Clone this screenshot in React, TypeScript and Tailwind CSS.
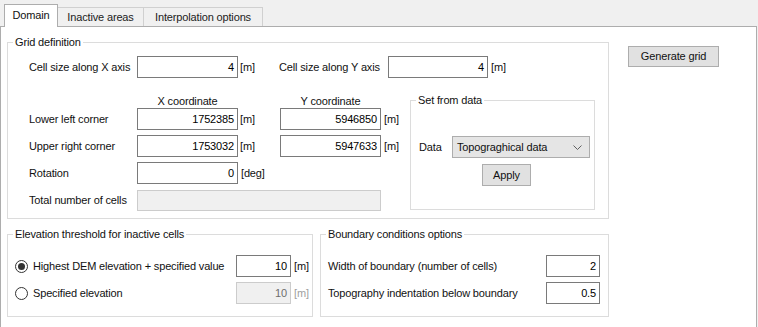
import React from "react";

function GroupBox({ title, className = "", children }: { title: string; className?: string; children?: React.ReactNode }) {
  return (
    <fieldset className={`border border-[#dcdcdc] ${className}`}>
      <legend className="ml-[5px] px-[2px] leading-[13px]">{title}</legend>
      {children}
    </fieldset>
  );
}

function TextBox({ value = "", className = "", disabled = false }: { value?: string; className?: string; disabled?: boolean }) {
  return (
    <div
      className={`h-[22px] flex items-center justify-end pr-[3px] border shrink-0 ${
        disabled ? "border-[#cccccc] bg-[#f0f0f0] text-[#6d6d6d]" : "border-[#7a7a7a] bg-white text-black"
      } ${className}`}
    >
      {value}
    </div>
  );
}

function Radio({ checked = false }: { checked?: boolean }) {
  return (
    <span className="w-[13px] h-[13px] rounded-full border border-[#333333] bg-white flex items-center justify-center shrink-0">
      {checked && <span className="w-[7px] h-[7px] rounded-full bg-[#333333]" />}
    </span>
  );
}

function Button({ label, className = "" }: { label: string; className?: string }) {
  return (
    <div className={`flex items-center justify-center bg-[#e1e1e1] border border-[#adadad] ${className}`}>
      {label}
    </div>
  );
}

export default function App() {
  return (
    <div className="w-[758px] h-[327px] overflow-hidden bg-[#f0f0f0] text-[11px] tracking-[-0.15px] text-[#111111] font-['Liberation_Sans',sans-serif]">
      {/* Tabs */}
      <div className="h-[26px] flex items-end pl-[4px]">
        <div className="relative z-10 -mb-px w-[54px] h-[23px] bg-white border border-b-0 border-[#adadad] flex items-center justify-center pb-[1px]">
          Domain
        </div>
        <div className="-ml-px w-[87px] h-[19px] border border-b-0 border-[#d0d0d0] bg-[#f0f0f0] flex items-center justify-center text-[#222222]">
          Inactive areas
        </div>
        <div className="-ml-px w-[120px] h-[19px] border border-b-0 border-[#d0d0d0] bg-[#f0f0f0] flex items-center justify-center text-[#222222]">
          Interpolation options
        </div>
      </div>

      {/* Tab page */}
      <div className="w-[757px] h-[301px] bg-white border-x border-t border-[#adadad] pl-[6px]">
        <div className="flex items-start">
          <GroupBox title="Grid definition" className="mt-[9px] w-[602px] h-[183px]">
            <div className="pl-[21px]">
              <div className="mt-[7px] flex items-center h-[22px]">
                <span className="w-[108px]">Cell size along X axis</span>
                <TextBox value="4" className="w-[101px]" />
                <span className="w-[41px] pl-[2px]">[m]</span>
                <span className="w-[109px]">Cell size along Y axis</span>
                <TextBox value="4" className="w-[100px]" />
                <span className="pl-[3px]">[m]</span>
              </div>

              <div className="mt-[16px] flex items-start">
                <div className="w-[381px]">
                  <div className="h-[14px] flex items-center">
                    <span className="w-[108px]" />
                    <span className="w-[101px] text-center">X coordinate</span>
                    <span className="w-[42px]" />
                    <span className="w-[101px] text-center">Y coordinate</span>
                  </div>
                  <div className="flex flex-col gap-[5px]">
                    <div className="flex items-center h-[22px]">
                      <span className="w-[108px]">Lower left corner</span>
                      <TextBox value="1752385" className="w-[101px]" />
                      <span className="w-[42px] pl-[2px]">[m]</span>
                      <TextBox value="5946850" className="w-[101px]" />
                      <span className="pl-[3px]">[m]</span>
                    </div>
                    <div className="flex items-center h-[22px]">
                      <span className="w-[108px]">Upper right corner</span>
                      <TextBox value="1753032" className="w-[101px]" />
                      <span className="w-[42px] pl-[2px]">[m]</span>
                      <TextBox value="5947633" className="w-[101px]" />
                      <span className="pl-[3px]">[m]</span>
                    </div>
                    <div className="flex items-center h-[22px]">
                      <span className="w-[108px]">Rotation</span>
                      <TextBox value="0" className="w-[101px]" />
                      <span className="pl-[3px]">[deg]</span>
                    </div>
                    <div className="mt-[1px] flex items-center h-[21px]">
                      <span className="w-[108px]">Total number of cells</span>
                      <TextBox disabled className="w-[244px] !h-[21px]" />
                    </div>
                  </div>
                </div>

                <GroupBox title="Set from data" className="w-[185px] h-[116px]">
                  <div className="mt-[29px] flex items-center h-[22px] pl-[8px]">
                    <span className="w-[33px]">Data</span>
                    <div className="w-[138px] h-[22px] bg-[#e5e5e5] border border-[#adadad] flex items-center justify-between pl-[4px] pr-[7px]">
                      <span>Topograghical data</span>
                      <svg width="9" height="5" viewBox="0 0 9 5">
                        <path d="M0.5 0.5 L4.5 4.5 L8.5 0.5" fill="none" stroke="#606060" strokeWidth="1" />
                      </svg>
                    </div>
                  </div>
                  <Button label="Apply" className="mt-[6px] ml-[71px] w-[49px] h-[22px]" />
                </GroupBox>
              </div>
            </div>
          </GroupBox>

          <Button label="Generate grid" className="ml-[19px] mt-[19px] w-[91px] h-[21px]" />
        </div>

        <div className="mt-[9px] flex items-start">
          <GroupBox title="Elevation threshold for inactive cells" className="w-[306px] h-[89px]">
            <div className="mt-[14px] pl-[7px] flex flex-col gap-[5px]">
              <div className="flex items-center h-[22px]">
                <div className="w-[221px] flex items-center">
                  <Radio checked />
                  <span className="ml-[5px]">Highest DEM elevation + specified value</span>
                </div>
                <TextBox value="10" className="w-[55px]" />
                <span className="pl-[3px]">[m]</span>
              </div>
              <div className="flex items-center h-[22px]">
                <div className="w-[221px] flex items-center">
                  <Radio />
                  <span className="ml-[5px]">Specified elevation</span>
                </div>
                <TextBox value="10" disabled className="w-[55px]" />
                <span className="pl-[3px] text-[#a0a0a0]">[m]</span>
              </div>
            </div>
          </GroupBox>

          <GroupBox title="Boundary conditions options" className="ml-[7px] w-[289px] h-[89px]">
            <div className="mt-[14px] pl-[7px] flex flex-col gap-[5px]">
              <div className="flex items-center h-[22px]">
                <span className="w-[218px]">Width of boundary (number of cells)</span>
                <TextBox value="2" className="w-[54px]" />
              </div>
              <div className="flex items-center h-[22px]">
                <span className="w-[218px]">Topography indentation below boundary</span>
                <TextBox value="0.5" className="w-[54px]" />
              </div>
            </div>
          </GroupBox>
        </div>
      </div>
    </div>
  );
}
